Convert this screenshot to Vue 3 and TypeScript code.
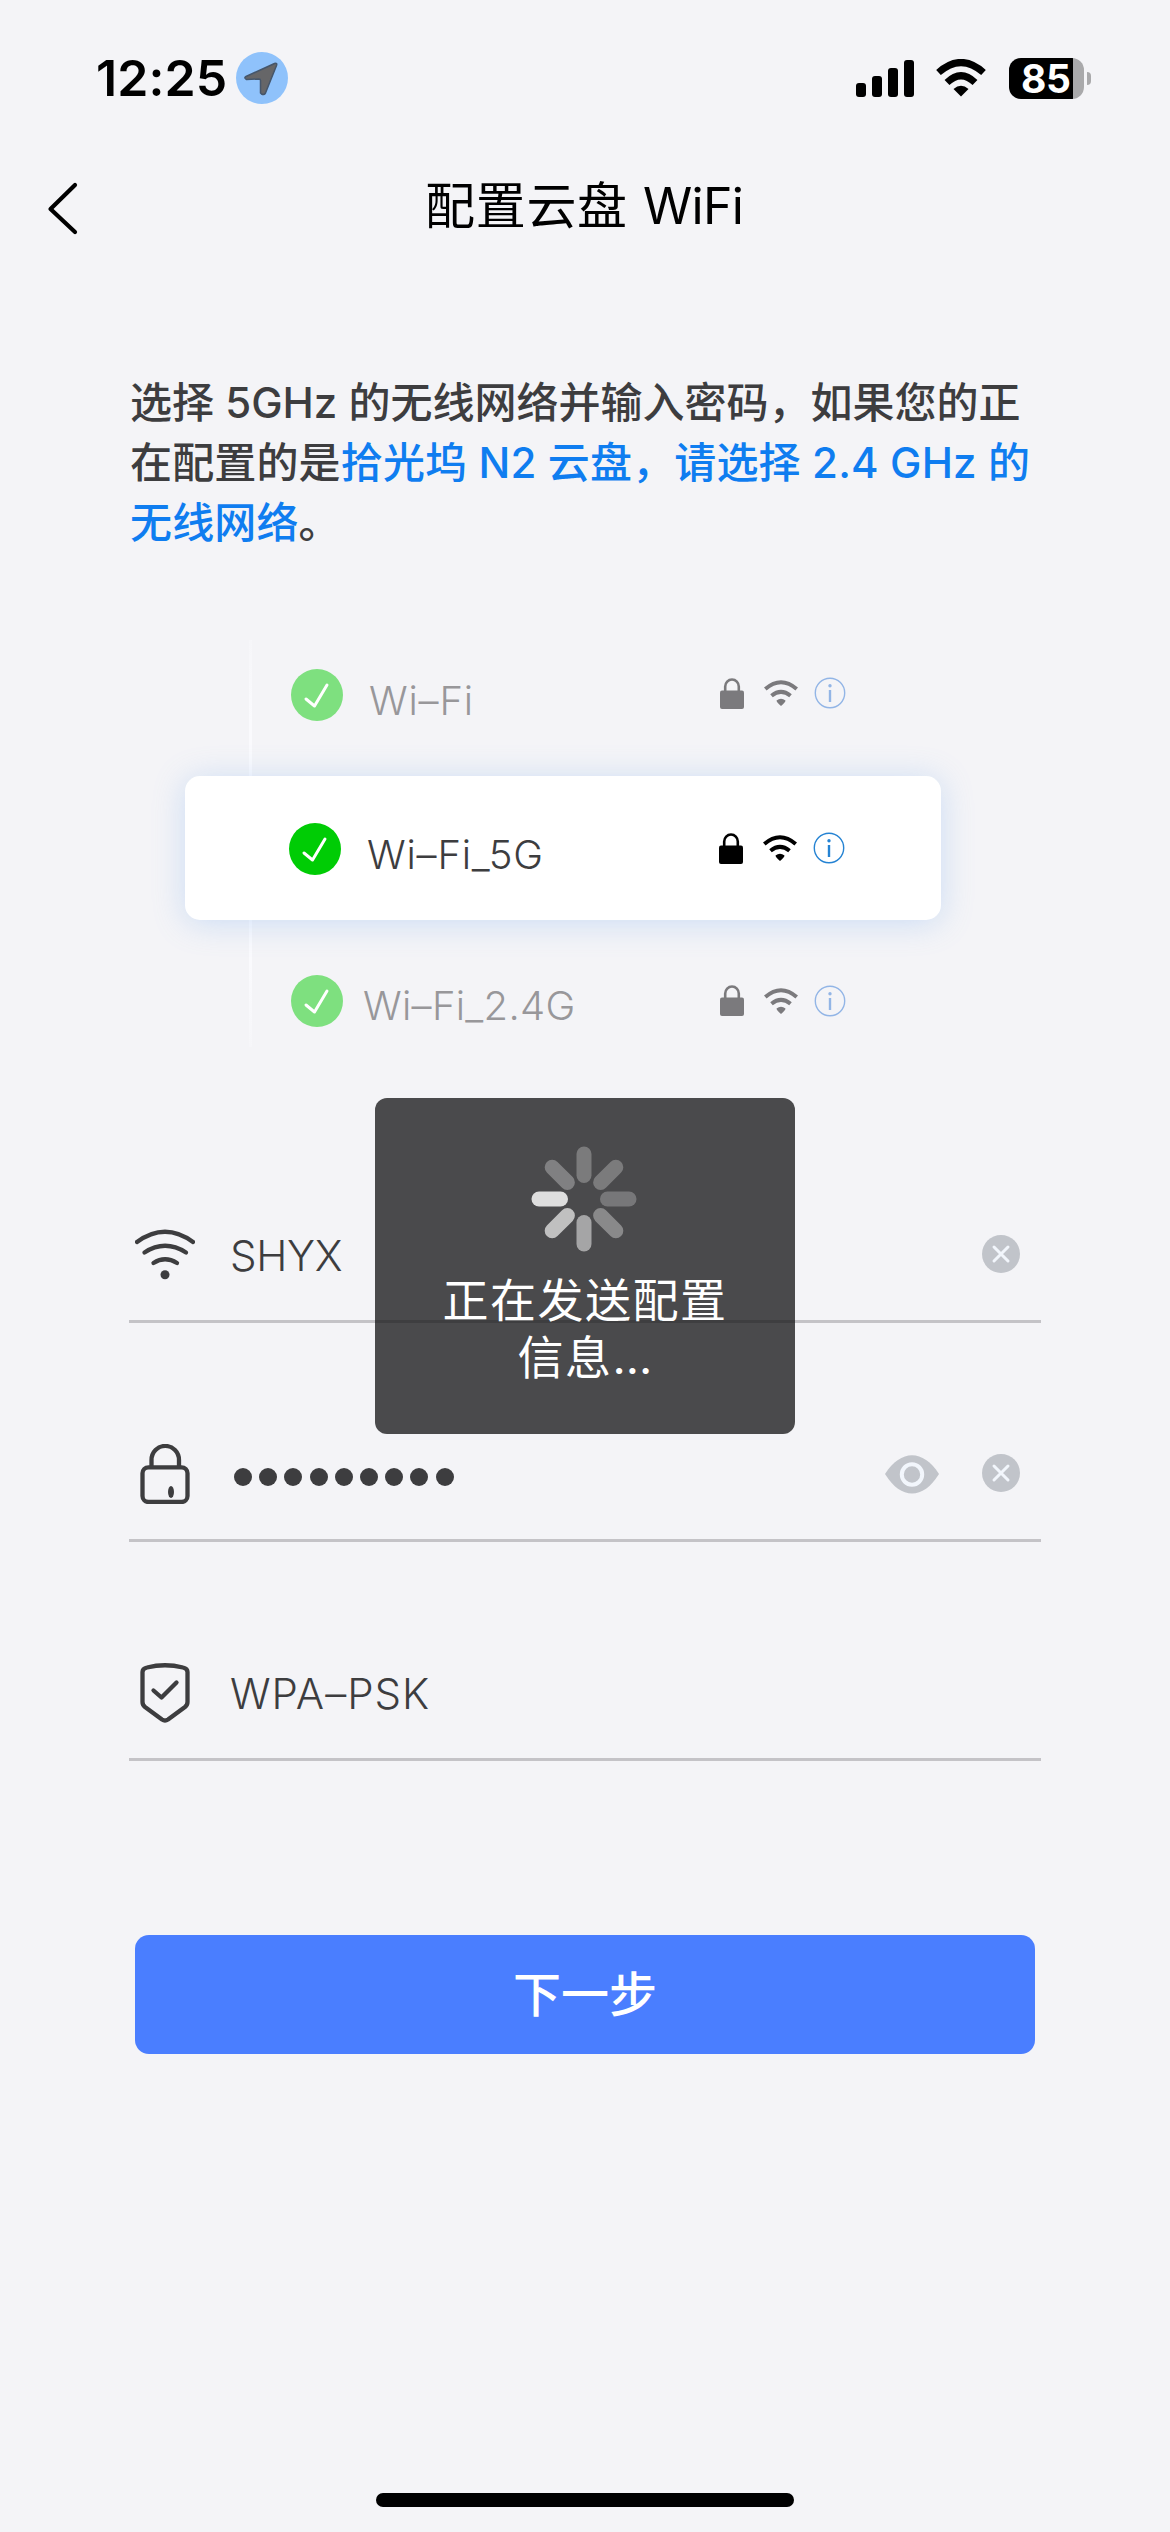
<script setup lang="ts">
interface Network {
  name: string
  state: 'faded' | 'active'
  kind: string
}

const networks: Network[] = [
  { name: 'Wi–Fi', state: 'faded', kind: 'first' },
  { name: 'Wi–Fi_5G', state: 'active', kind: 'middle' },
  { name: 'Wi–Fi_2.4G', state: 'faded', kind: 'last' },
]

const signalBars = [14, 21, 29, 37]
const passwordLength = 9

// Opacity of each spinner blade, clockwise from the top
const blades = [0.27, 0.27, 0.25, 0.35, 0.5, 0.65, 0.82, 0.3]
</script>

<template>
  <div class="screen">
    <header class="status">
      <span class="time">12:25</span>
      <svg class="location" viewBox="0 0 52 52">
        <circle cx="26" cy="26" r="26" fill="#8fc2fb" />
        <path d="M10 24.5 38.500 11.500Q41.500 10.500 40.500 13.500L29.500 41Q28 43.500 25.500 42L24.500 41V28.500Q24.500 27 23 27L10.500 27.500Q7.500 26 10 24.500Z" fill="#666668" stroke="#45566b" stroke-width="1.500" />
      </svg>
      <div class="signal">
        <i v-for="h in signalBars" :key="h" :style="{ height: h + 'px' }"></i>
      </div>
      <svg class="cell-wifi" viewBox="0 0 50 38">
        <g fill="none" stroke="#000" stroke-width="7">
          <path d="M2.500 13.500Q25-6.500 47.500 13.500" />
          <path d="M11 23.500Q25 10 39 23.500" />
        </g>
        <path d="M17.500 30Q25 23.500 32.500 30L25 37.500Z" />
      </svg>
      <div class="battery"><span>85</span></div>
      <i class="nub"></i>
    </header>

    <nav class="nav">
      <svg class="back" viewBox="0 0 32 54">
        <path d="M28 4 3.500 28 28 51" fill="none" stroke="#000" stroke-width="4.200" stroke-linecap="round" stroke-linejoin="round" />
      </svg>
      <h1><span class="title-cn">配置云盘</span><span class="title-en">WiFi</span></h1>
    </nav>

    <div class="hint">
      <p class="tight">选择 5GHz 的无线网络并输入密码，如果您的正</p>
      <p>在配置的是<span class="blue">拾光坞 N2 云盘，请选择 2.4 GHz 的</span></p>
      <p><span class="blue">无线网络</span>。</p>
    </div>

    <section class="networks">
      <div v-for="n in networks" :key="n.name" class="network" :class="[n.state, n.kind]">
        <svg class="check" viewBox="0 0 52 52">
          <circle cx="26" cy="26" r="26" />
          <path d="M15 30 23.500 37 36 16" fill="none" stroke="#fff" stroke-width="3" stroke-linecap="round" stroke-linejoin="round" />
        </svg>
        <span class="ssid">{{ n.name }}</span>
        <div class="marks">
          <svg class="mini-lock" viewBox="0 0 24 31">
            <path d="M5.200 13V8.500a6.800 7 0 0 1 13.600 0V13" fill="none" stroke="currentColor" stroke-width="2.600" />
            <rect y="12.500" width="24" height="18.500" rx="2" fill="currentColor" />
          </svg>
          <svg class="mini-wifi" viewBox="0 0 34 26">
            <g fill="none" stroke="currentColor" stroke-width="4">
              <path d="M1.300 9Q17-4.500 32.700 9" />
              <path d="M7.500 15.800Q17 8 26.500 15.800" />
            </g>
            <path d="M12.500 20.500Q17 17 21.500 20.500 21.500 22 17 26 12.500 22 12.500 20.500Z" fill="currentColor" />
          </svg>
          <svg class="info" viewBox="0 0 32 32">
            <circle cx="16" cy="16" r="14.700" fill="none" stroke="currentColor" stroke-width="1.400" />
            <circle cx="16" cy="8.700" r="1.700" fill="currentColor" />
            <path d="M16 13V25" stroke="currentColor" stroke-width="2.400" />
          </svg>
        </div>
      </div>
    </section>

    <section class="form">
      <div class="field">
        <svg class="lead" viewBox="0 0 60 60">
          <g fill="none" stroke="#3d3d3f" stroke-width="4.300" stroke-linecap="round">
            <path d="M2 17Q30-3.500 58 17" />
            <path d="M9.500 27.500Q30 14 51 27.500" />
            <path d="M18.500 38Q30 30.500 42 38" />
          </g>
          <circle cx="30" cy="49.700" r="4.500" fill="#3d3d3f" />
        </svg>
        <span class="value">SHYX</span>
        <svg class="clear" viewBox="0 0 38 38">
          <circle cx="19" cy="19" r="19" fill="#c1c4ca" />
          <path d="M12 12 26 26M26 12 12 26" stroke="#f2f6fc" stroke-width="3" stroke-linecap="round" />
        </svg>
      </div>

      <div class="field">
        <svg class="lead" viewBox="0 0 60 60">
          <g fill="none" stroke="#3d3d3f" stroke-width="4.300">
            <path d="M16.500 23V16A13.700 14 0 0 1 44 16V23" />
            <rect x="7.500" y="23.300" width="45" height="34.700" rx="6" />
          </g>
          <ellipse cx="36" cy="48" rx="3" ry="6" fill="#3d3d3f" />
        </svg>
        <div class="dots"><i v-for="d in passwordLength" :key="d"></i></div>
        <svg class="eye" viewBox="0 0 54 40">
          <path d="M0 20C16-5 38-5 54 20 38 46 16 46 0 20Z" fill="#c1c4ca" />
          <circle cx="27" cy="20.500" r="10.200" fill="none" stroke="#f2f6fc" stroke-width="4" />
        </svg>
        <svg class="clear" viewBox="0 0 38 38">
          <circle cx="19" cy="19" r="19" fill="#c1c4ca" />
          <path d="M12 12 26 26M26 12 12 26" stroke="#f2f6fc" stroke-width="3" stroke-linecap="round" />
        </svg>
      </div>

      <div class="field">
        <svg class="lead" viewBox="0 0 60 60">
          <g fill="none" stroke="#3d3d3f" stroke-width="4.300" stroke-linejoin="round" stroke-linecap="round">
            <path d="M7.500 9Q7.500 5.500 12 4.500 30 0 48 4.500 52.500 5.500 52.500 9V39Q52.500 42 50 44L33 56.500Q30 58.500 27 56.500L10 44Q7.500 42 7.500 39Z" />
            <path d="M18.500 27.500 26.500 34.500 41.500 19.500" />
          </g>
        </svg>
        <span class="value wide">WPA–PSK</span>
      </div>
    </section>

    <button class="next" type="button">下一步</button>

    <div class="home"></div>

    <div class="toast">
      <svg class="spinner" viewBox="-53 -53 106 106">
        <rect
          v-for="(o, i) in blades"
          :key="i"
          x="-7.500"
          y="-52.500"
          width="15"
          height="36.500"
          rx="7.500"
          fill="#fff"
          :fill-opacity="o"
          :transform="`rotate(${i * 45})`"
        />
      </svg>
      <p>正在发送配置</p>
      <p>信息<span class="ellipsis">...</span></p>
    </div>
  </div>
</template>

<style>
body {
  margin: 0;
  background: #f4f4f7;
}
</style>

<style scoped>
.screen {
  position: relative;
  box-sizing: border-box;
  display: flex;
  flex-direction: column;
  width: 1170px;
  height: 2532px;
  overflow: hidden;
  background: #f4f4f7;
  color: #3d3d3f;
  font-family: Inter, "Noto Sans CJK SC", sans-serif;
}

svg {
  display: block;
  flex: none;
}

p,
h1 {
  margin: 0;
}

.status {
  display: flex;
  align-items: center;
  height: 156px;
  padding-left: 96px;
  color: #000;
}

.time {
  width: 140px;
  font-size: 50px;
  font-weight: 600;
  letter-spacing: 0.100px;
  white-space: nowrap;
}

.location {
  width: 52px;
  height: 52px;
}

.signal {
  display: flex;
  align-items: flex-end;
  gap: 6px;
  height: 37px;
  margin-left: 568px;
}

.signal i {
  width: 10px;
  border-radius: 3px;
  background: #000;
}

.cell-wifi {
  width: 50px;
  height: 38px;
  margin-left: 22px;
}

.battery {
  box-sizing: border-box;
  width: 75px;
  height: 41px;
  margin-left: 23px;
  padding-left: 12px;
  border-radius: 12px;
  background: linear-gradient(90deg, #000 64px, #a9a9ab 64px);
  color: #fff;
  font-size: 39px;
  font-weight: 700;
  line-height: 41px;
  letter-spacing: -0.500px;
}

.nub {
  width: 4px;
  height: 13px;
  margin-left: 3px;
  border-radius: 0 5px 5px 0;
  background: #a9a9ab;
}

.nav {
  display: flex;
  align-items: center;
  height: 100px;
  color: #000;
}

.back {
  width: 32px;
  height: 54px;
  margin: 4px 0 0 47px;
}

h1 {
  display: flex;
  align-items: center;
  margin-left: 346px;
  font-size: 50px;
  font-weight: 400;
  line-height: 72px;
  white-space: nowrap;
}

.title-cn {
  width: 218px;
  letter-spacing: 0.700px;
}

.title-en {
  letter-spacing: -0.700px;
}

.hint {
  margin: 117px 0 0 130px;
  font-size: 42px;
  font-weight: 500;
  line-height: 60px;
  letter-spacing: 0.150px;
  white-space: nowrap;
}

.tight {
  letter-spacing: 0;
}

.blue {
  color: #0f7df0;
}

.networks {
  display: flex;
  flex-direction: column;
  height: 407px;
  margin: 87px 0 0 185px;
  width: 756px;
  background:
    linear-gradient(#f6f6f9, #fafafd 20%, #fafafd 80%, #f6f6f9) 64px 0 / 3px 100% no-repeat;
}

.network {
  display: flex;
  align-items: center;
  box-sizing: border-box;
  height: 136px;
  padding-left: 106px;
  font-size: 40px;
  font-weight: 350;
}

.network.first {
  padding-bottom: 26px;
}

.network.active {
  height: 144px;
  padding: 2px 0 0 104px;
  border-radius: 15px;
  background: #fff;
  box-shadow: 0 3px 32px rgba(110, 165, 240, 0.300);
}

.network.last {
  height: 127px;
  padding-top: 34px;
}

.check {
  width: 52px;
  height: 52px;
  fill: #00cc05;
}

.faded .check {
  fill: #7ee07f;
}

.ssid {
  width: 350px;
  padding: 10px 0 0 26px;
  box-sizing: border-box;
  letter-spacing: 0.800px;
  white-space: nowrap;
}

.faded .ssid {
  color: #98979a;
}

.last .ssid {
  padding-left: 20px;
  letter-spacing: 0.300px;
}

.marks {
  display: flex;
  align-items: center;
  margin: -4px 0 0 27px;
  color: #000;
}

.active .marks {
  margin: -2px 0 0 28px;
}

.last .marks {
  margin-top: 0;
}

.faded .marks {
  color: #7b7a7d;
}

.mini-lock {
  width: 24px;
  height: 31px;
}

.mini-wifi {
  width: 34px;
  height: 26px;
  margin-left: 20px;
}

.info {
  width: 32px;
  height: 32px;
  margin-left: 16px;
  color: #2583d3;
}

.faded .info {
  color: #92b5e6;
}

.form {
  margin: 57px 129px 0;
}

.field {
  display: flex;
  align-items: center;
  box-sizing: border-box;
  height: 219px;
  padding: 86px 21px 0 6px;
  border-bottom: 3px solid #c4c3c7;
}

.lead {
  width: 60px;
  height: 60px;
}

.value {
  margin-left: 35px;
  font-size: 42px;
  font-weight: 350;
  letter-spacing: -0.300px;
  white-space: nowrap;
}

.wide {
  letter-spacing: 1px;
}

.dots {
  display: flex;
  gap: 7.200px;
  margin: 6px 0 0 39px;
}

.dots i {
  width: 18px;
  height: 18px;
  border-radius: 50%;
  background: #3d3d3f;
}

.clear {
  width: 38px;
  height: 38px;
  margin: 0 0 2px auto;
}

.eye {
  width: 54px;
  height: 40px;
  margin-left: auto;
}

.eye + .clear {
  margin-left: 43px;
}

.next {
  width: 900px;
  height: 119px;
  margin: 174px 0 0 135px;
  padding: 0;
  border: 0;
  border-radius: 14px;
  background: #4a7eff;
  color: #fff;
  font-family: inherit;
  font-size: 48px;
  font-weight: 500;
  line-height: 115px;
}

.home {
  width: 418px;
  height: 14px;
  margin: auto auto 25px;
  border-radius: 7px;
  background: #000;
}

.toast {
  position: absolute;
  top: 1098px;
  left: 375px;
  display: flex;
  flex-direction: column;
  align-items: center;
  box-sizing: border-box;
  width: 420px;
  height: 336px;
  padding: 48px 3px 0 0;
  border-radius: 12px;
  background: rgba(18, 17, 19, 0.750);
  color: #fff;
  font-size: 46px;
  line-height: 57px;
}

.toast p {
  padding-left: 3px;
  letter-spacing: 1.500px;
}

.toast .ellipsis {
  letter-spacing: 0;
}

.spinner {
  width: 106px;
  height: 106px;
  margin-bottom: 20px;
}
</style>
